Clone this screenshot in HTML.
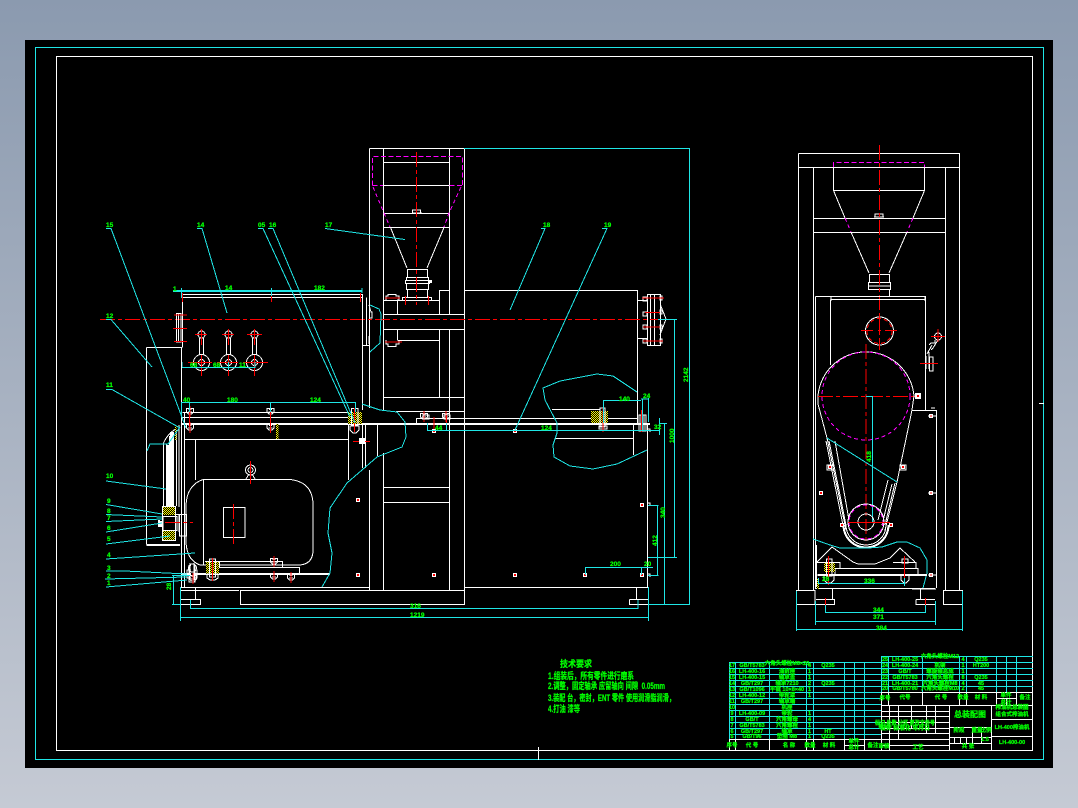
<!DOCTYPE html>
<html lang="zh"><head><meta charset="utf-8"><title>CAD</title>
<style>
html,body{margin:0;padding:0;width:1078px;height:808px;overflow:hidden;background:linear-gradient(180deg,#8b9aaf 0%,#c5cad4 100%)}
svg{position:absolute;left:0;top:0}
text{font-family:"Liberation Sans","Noto Sans CJK SC",sans-serif;fill:#00ff00;stroke:#00ff00;stroke-width:.25;font-weight:bold}
.w{stroke:#fff;fill:none;stroke-width:1}
.c{stroke:#1fe6e6;fill:none;stroke-width:1}
.r{stroke:#f00;fill:none;stroke-width:1}
.rd{stroke:#f00;fill:none;stroke-width:1;stroke-dasharray:15 3 4 3}
.m{stroke:#f0f;fill:none;stroke-width:1;stroke-dasharray:5 2.5}
.m2{stroke:#f0f;fill:none;stroke-width:1;stroke-dasharray:4 3}
</style></head><body>
<svg width="1078" height="808" viewBox="0 0 1078 808" xmlns="http://www.w3.org/2000/svg">
<defs>
<pattern id="h" width="2" height="2" patternUnits="userSpaceOnUse"><rect width="2" height="2" fill="#000"/><rect width="1" height="1" fill="#ff0"/><rect x="1" y="1" width="1" height="1" fill="#ff0"/></pattern>
<g id="b"><path class="w" d="M-3.5,-2.5H3.5V1L1.5,3H-1.5L-3.5,1Z"/><path class="w" d="M-1.5,-1.5H1.5M-2,1H2"/><path class="r" d="M0,-5V6"/></g>
<g id="d"><rect x="-2" y="-2" width="4" height="4" fill="#fff"/><rect x="-1" y="-1" width="2" height="2" fill="#f00"/></g>
</defs>
<rect x="25" y="40" width="1028" height="728" fill="#000"/>
<g shape-rendering="crispEdges">
<path d="M35.500,47.500H1043.500V759.500H35.500Z" fill="none" stroke="#1fe6e6" stroke-width="1"/>
<path d="M56.500,56.500H1032.500V750.500H56.500Z" fill="none" stroke="#fff" stroke-width="1"/>
<path class="w" d="M538.500,747V760M1039,403.500H1044"/>

<!-- main front view: frame -->
<path class="w" d="M369.500,148.500H464.500V604.500H240.500V590.500H464.500M369.500,148.500V408M369.500,470V590M383.500,148.500V411M383.500,453V590M449.500,148.500V314M449.500,329V590M383.500,162.500H449.500M383.500,185.500H449.500M383.500,213.500H449.500M383.500,227.500H449.500M377.500,424V456"/>
<path class="w" d="M383.500,300.500H439.500V290.500H449.500M383.500,314.500H464.500M383.500,329.500H464.500M397.500,340.500H439.500M439.500,290V314M439.500,329V397M383.500,397.500H464.500M396,411.500H464.500M383.500,487.500H449.500M383.500,502.500H449.500M397.500,300V314M397.500,329V340"/>
<path class="w" d="M390.500,227.500L407,268M444,227.500L427,268"/>
<path class="m" d="M372.500,185.500V156.500H462.500V185.500M372.500,185.500H383M449.500,185.500H462.500"/>
<path class="m2" d="M373,187L384,213L390,227M461,187L449,213L444,227"/>
<path class="w" d="M407.500,269.500H427.500V277.500H407.500ZM406.500,277.500H428.500V280.500H406.500ZM405.500,280.500H429.500V283.500H405.500ZM406.500,283.500H428.500V289.500H406.500ZM407.500,289.500H427.500V297.500H407.500ZM402.500,297.500H431.500V300.500H402.500Z"/>
<rect x="428" y="280" width="4" height="3" fill="#fff"/>
<path class="w" d="M412.500,213V210H420.500V213M412,213H422"/>
<path class="w" d="M386,300V296H388V294.500H396V296H399V300H397M386,340V344H388V346.500H396V344H399V340"/>
<path class="rd" d="M416.500,152V305"/>
<path class="r" d="M405.500,296V305M428.500,296V305M385,298H400M385,342H402"/>

<!-- right body -->
<path class="w" d="M464.500,290.500H637.500V425M637.500,300.500H648M637.500,338.500H648"/>
<path class="w" d="M647.500,294.500H660.500V345.500H647.500ZM650.500,294.500V345.500M654.500,294.500V345.500M660.500,305L666,319L660,335"/>
<path class="w" d="M643,297H647V301H643ZM643,312H647V316H643ZM643,325H647V329H643ZM643,339H647V343H643ZM660,296H662V300H660ZM660,310H662V314H660ZM660,325H662V329H660ZM660,339H662V343H660Z"/>
<path class="r" d="M642,298H664M645,312.500H660M643,327H660M643,341H663"/>
<path class="rd" d="M100,319.500H670"/>

<!-- upper-left box -->
<path class="w" d="M182.500,294.500H362.500V298M182.500,297.500H362.500M182.500,294.500V347M362.500,297V410M362,345.500H369M366.500,297.500V345.500M146.500,347.500H182.500M146.500,347.500V544.500M146.500,544.500H180M146.500,545.500H180"/>
<path class="w" d="M176.500,313.500H181V342H176.500ZM178.500,313.500V342"/>
<path class="r" d="M174,315H187M173,328.500H187M174,341.500H187M182.500,293V302M271.500,293V302M360.500,293V302"/>
<path class="w" d="M369,305L371,312H372V318H369M369,336V344"/>
<!-- gauges -->
<g class="w">
<circle cx="201.500" cy="362.500" r="8"/><circle cx="228.500" cy="362.500" r="8"/><circle cx="254.500" cy="362.500" r="8"/>
<circle cx="201.500" cy="362.500" r="3"/><circle cx="228.500" cy="362.500" r="3"/><circle cx="254.500" cy="362.500" r="3"/>
<circle cx="201.500" cy="334.500" r="3.500"/><circle cx="228.500" cy="334.500" r="3.500"/><circle cx="254.500" cy="334.500" r="3.500"/>
<path d="M199.500,338V355M203.500,338V355M226.500,338V355M230.500,338V355M252.500,338V355M256.500,338V355"/>
</g>
<path class="r" d="M195,334.500H207M222,334.500H234M247,334.500H262M201.500,329V345M228.500,329V345M254.500,329V345M188,362.500H212M217,362.500H238M243,362.500H268M201.500,355V376M228.500,355V376M254.500,355V376"/>
<path class="c" d="M182,367.500H255M182,362V368M228.500,362V370M255,362V368"/>

<!-- middle plate -->
<path class="w" d="M182.500,412.500H362M182.500,417.500H362M181,423.500H650M181,424.500H650M184.500,439.500H348M195.500,440V480M348.500,424V480M362.500,424V468M365.500,424V468M416.500,423V418.500H637M552,409.500H600M555,438.500H633M633.500,424V455"/>
<path class="w" d="M181.500,347V587M184.500,412V587"/>
<path class="w" d="M647.500,423V587M464.500,587.500H648M181,587.500H369M181,590.500H239M195.500,588V599M181,599.500H200.500V604.500H181M636.500,588V599M629.500,599.500H648M629.500,599.500V604.500H648"/>
<!-- motor -->
<path class="w" d="M203.500,479.500H290Q313,482 313,505V550Q313,565 298,565H200Q186,560 186,540V505Q187,485 203,479.500ZM203.500,479.500V565M223.500,507.500H245V537.500H223.500Z"/>
<path class="rd" d="M233.500,504V544"/>
<circle class="w" cx="250.500" cy="470" r="5"/><circle class="w" cx="250.500" cy="470" r="2.500"/>
<path class="w" d="M246,479L249,474M255,479L252,474"/>
<path class="r" d="M250.500,461V484"/>
<path class="w" d="M205,561.500H282.500V567.500M219,567.500H299.500V573M181,573.500H330M181,574.500H330M219.500,561V567"/>
<!-- fan/pulley -->
<path class="w" d="M163.500,444V506M166.500,444V506M169.500,436V506M173.500,432V506M176.500,430V506M179,425V507"/>
<path class="w" d="M163,444Q168,433 176,429"/>
<path d="M166.500,506H169.500V445H166.500ZM170,506H173V432H170Z" fill="#fff"/>
<rect class="w" x="162.500" y="506.500" width="13" height="34"/>
<rect x="163" y="507" width="12" height="8" fill="url(#h)"/>
<rect x="163" y="531" width="12" height="9" fill="url(#h)"/>
<path class="w" d="M163,516.500H177V530.500H163ZM176,514.500H179V532M179.500,514.500H186.500V536H179.500Z"/>
<rect x="158" y="520" width="5" height="7" fill="#fff"/><rect x="160" y="519" width="2" height="2" fill="#000"/>
<path class="rd" d="M165,522.500H193"/>
<!-- motor mounts -->
<path class="w" d="M189,565.500H195V582H189ZM187,570H197V578H187Z"/>
<rect x="191" y="562" width="3" height="20" fill="#000"/><path class="w" d="M190,563V580M194,563V580"/>
<circle class="w" cx="192.500" cy="568" r="4"/>
<rect x="206" y="562" width="13" height="12" fill="url(#h)"/>
<path class="w" d="M209.500,559H215.500V577H209.500ZM207,574H218V578L215,580H210L207,578Z"/>
<path class="r" d="M212.500,558V581"/>
<use href="#b" x="274" y="561"/><use href="#b" x="291" y="577"/><use href="#b" x="274" y="576"/><use href="#b" x="193" y="578"/>
<use href="#b" x="190" y="411"/><use href="#b" x="190" y="427"/><use href="#b" x="270.500" y="411"/><use href="#b" x="270.500" y="427"/>
<path class="r" d="M189.500,411V427M270.500,411V430"/>
<rect x="276" y="424" width="2.500" height="15" fill="url(#h)"/>
<path d="M175,425h1.500v15h-1.500z" fill="url(#h)"/>
<rect x="348" y="412" width="14" height="12" fill="url(#h)"/>
<path class="w" d="M351.500,408.500H358V425H351.500ZM350,426H359V430L356,433H353L350,430Z"/>
<path class="r" d="M354.500,408V432M353,441.500H370"/>
<rect x="359" y="438" width="6" height="6" fill="#fff"/>
<use href="#b" x="424" y="416"/><use href="#b" x="446" y="416"/>
<path class="w" d="M423,415H429V419H423ZM444,415H450V419H444Z"/>
<!-- right inner hatched bolt -->
<rect x="591" y="411" width="17" height="12" fill="url(#h)"/>
<path class="w" d="M600,408V427H605V408ZM599,426H607V429H599Z"/>
<path class="r" d="M603,408V432"/>
<path class="w" d="M639,415H646V431H639ZM641,415V431M644,415V431"/>
<path class="r" d="M641.500,410V432M434,417V430M446.500,415V430"/>
<use href="#d" x="358" y="500"/><use href="#d" x="358" y="575"/><use href="#d" x="434" y="575"/><use href="#d" x="515" y="575"/><use href="#d" x="585" y="575"/><use href="#d" x="642" y="575"/><use href="#d" x="642" y="505"/><use href="#d" x="515" y="431"/><use href="#d" x="434" y="431"/>
<path class="w" d="M648,429H650V432M648,503H650V506M648,574H650V577"/>

<!-- break curves -->
<path class="c" d="M362,404L380,410L397,412L405,422L406,437L402,447L377,457L347,483L330,508L328,533L332,553L330,573L322,587"/>
<path class="c" d="M637,392L613,376L597,374L560,381L543,388L545,400L557,423L557,433L553,445L554,457L570,466L593,469L617,464L647,450"/>
<path class="c" d="M370,305L379,309L381,314L380,343L370,352"/>
<path class="c" d="M147,451L150,444H168L180,427"/>

<!-- leaders -->
<path class="c" d="M106,228.500H111L186,428M197,228.500H202L227,313M258,228.500H263L350,417M268,228.500H273L355,423M325,228.500L405,239.500M106,319.500H111L152,367M106,389.500H112L180,428M541,228.500H545L510,310M602,228.500H607L515,430"/>
<path class="c" d="M106,481L166,489M106,504.500L162,514M106,514.500L162,517M106,521.500L162,519M106,532L162,523M106,544L170,536M106,559L195,553M106,571H125L187,574M105,579L187,577M106,587L187,580"/>

<!-- dimension lines -->
<path class="c" d="M173,290.500H362M173,291.500H362M181.500,288V298M271.500,288V296M362,288V293"/>
<path class="c" d="M181.500,402.500H355.500M181.500,402V416M189.500,402V412M355.500,402V412M270.500,402V412"/>
<path class="c" d="M464,148.500H690M689.500,148.500V604.500H648M674.500,319.500V557.500M658,319.500H677M648,557.500H677M664.500,423V604M660,423.500H667M427.500,423V431M427,430.500H648M446.500,423V431M659.500,418V435M648,430.500H660"/>
<path class="c" d="M603.500,400.500H641M603.500,400V423M642.500,399.500V430M648.500,398V422M641,399H649M648,505.500H658.500M657.500,505.500V575.500M648,575.500H658.500M585.500,567.500H653M585.500,567V575M641.500,567V575"/>
<path class="c" d="M172,604.500H181M173.500,575V604M172,575.500H190M190.500,600V609M190,608.500H638M638,600V609M180.500,587V621M180,617.500H648M648.500,587V621"/>

<!-- side view -->
<path class="w" d="M798.500,153.500H959.500V590.500M798.500,153.500V590.500M798.500,167.500H959.500M813.500,167.500V590M945.500,167.500V590M813.500,218.500H945.500M813.500,232.500H945.500"/>
<path class="w" d="M833.500,167.500V190.500H924.500V167.500M833.500,190.500L845,218M851,232L869,273M924.500,190.500L913,218M907,232L889,273"/>
<path class="m" d="M833.500,167V162.500H924.500V167"/>
<path class="m2" d="M845,218L851,232M913,218L907,232"/>
<path class="w" d="M869.500,274.500H889.500V282.500H869.500ZM868.500,282.500H890.500V289.500H868.500ZM868.500,286H890.500M869.500,289.500H889.500V296"/>
<path class="w" d="M875,217V214H883V217M874,217H884"/>
<path class="rd" d="M879.500,145V350"/>
<path class="w" d="M815.500,296.500H925.500V410M830.500,299.500H925.500M830.500,299.500V365M815.500,296.500V588M925,296V301M831,296V301"/>
<circle class="w" cx="879.500" cy="331" r="14"/>
<circle cx="879.500" cy="331" r="12.500" fill="none" stroke="#f00" stroke-dasharray="4 3"/>
<path class="r" d="M861,330.500H873M885,330.500H897M878,330.500H881M879.500,316V322M879.500,340V346"/>
<path class="w" d="M818,404A48,48 0 1 1 914,396"/>
<circle class="m2" cx="866" cy="396" r="44"/>
<path class="rd" d="M866,344V545"/>
<path class="rd" d="M818,396.500H915"/>
<rect x="915" y="393" width="6" height="6" fill="#fff"/><rect x="917" y="395" width="2" height="2" fill="#f00"/>
<path class="w" d="M818,404L827,438L846,530M914,396L912,410L897,482L885,530M826,441L843,525M829,441L846,525M835,441L849,520M892,484L882,525M895,483L885,525M888,480L878,520"/>
<path class="c" d="M827,438L897,482M866,396.500H873M872.500,396V522M866,522.500H873"/>
<circle class="w" cx="866" cy="522" r="8"/>
<circle class="w" cx="866" cy="522" r="18"/>
<circle class="m2" cx="866" cy="522" r="17"/>
<path class="w" d="M846,525A20,20 0 0 0 886,525M843,525A23,23 0 0 0 889,525M844,525A22,22 0 0 0 888,525"/>
<path class="r" d="M848,522.500H890"/>
<use href="#d" x="830" y="467"/><use href="#d" x="903" y="467"/><use href="#d" x="842" y="525"/><use href="#d" x="891" y="525"/><use href="#d" x="821" y="493"/><use href="#d" x="931" y="416"/><use href="#d" x="931" y="493"/><use href="#d" x="931" y="575"/>
<path class="w" d="M827,465H833V470H827ZM900,465H906V470H900ZM928,416H936M928,493H936M928,575H936"/>
<path class="w" d="M912.500,410.500H936.500V588M912,589H936M931,408H935"/>
<path class="w" d="M926,356V369M929,352V369M929.500,357H933V371H929.500ZM929,345L931,343H935V340M931,350L933,348L938,340M927,354L932,345"/>
<circle class="w" cx="938" cy="336.500" r="3.500"/>
<path class="r" d="M931,336.500H945M938,329V342M920,363.500H938"/>
<!-- side base -->
<path class="c" d="M813,539L830,545L840,548H868L882,547L897,542H907L920,548L927,560V573L923,588"/>
<path class="w" d="M817,562L832,547L853,562L858,564H875L890,558L900,548L915,562M817,562.500H840V568M893,562.500H916V568M835,568.500H918V574M835,568V574M817.500,574.500H927M817.500,575.500H927"/>
<path class="w" d="M816.500,545V587M815,588.500H935M832.500,589V599M920.500,589V599M816,599.500H834.500V604.500H816M916,599.500H935M916,599.500V604.500H935M796.500,590.500H815V604.500H796.500ZM943.500,590.500H962.500V604.500H943.500Z"/>
<path class="w" d="M826.500,559H832V576H826.500ZM824,575H834V580L831,583H827L824,580ZM902,559H908V563H902ZM901,575H909V580L906,583H904L901,580Z"/>
<rect x="824" y="563" width="11" height="9" fill="url(#h)"/>
<path class="w" d="M826.500,559H832V576H826.500Z"/>
<path class="r" d="M828.500,556V585M904.500,556V585M825.500,598V611M925.500,598V611"/>
<rect x="817" y="578" width="2" height="11" fill="url(#h)"/>
<path class="c" d="M796.500,591V631M796,629.500H962M962.500,591V631M815.500,601V625M815,621.500H935M935.500,601V625M825.500,605V613M825,612.500H925M925.500,605V613M818,583.500H905M818.500,578V584M904.500,578V586"/>

<!-- tables -->
<path class="c" d="M729,662.500H881M729,668.500H881M729,674.500H881M729,680.500H881M729,686.500H881M729,692.500H881M729,698.500H881M729,704.500H881M729,710.500H881M729,716.500H881M729,722.500H881M729,728.500H881M729,734.500H881"/>
<path class="c" d="M729.500,662V739M735.500,662V739M769.500,662V739M806.500,662V739M813.500,662V739M844.500,662V739M854.500,662V739M864.500,662V739"/>
<path class="c" d="M881,656.500H1033M881,662.500H1033M881,668.500H1033M881,674.500H1033M881,680.500H1033M881,686.500H1033"/>
<path class="c" d="M881.500,656V692M888.500,656V692M922.500,656V692M959.500,656V692M966.500,656V692M996.500,656V692M1006.500,656V692M1016.500,656V692"/>
<path class="w" d="M729,739.500H881M729.500,739V751M735.500,739V751M769.500,739V751M806.500,739V751M813.500,739V751M844.500,739V751M864.500,739V751M844,745.500H864M881.500,692V751M881,692.500H1033M888.500,692V705M922.500,692V705M959.500,692V705M966.500,692V705M996.500,692V705M1016.500,692V705M996,698.500H1016M1006.500,698.500V705"/>
<path class="w" d="M881,705.500H1033M881,711.500H949M881,716.500H949M881,722.500H949M881,728.500H949M881,733.500H949M881,739.500H949M881,745.500H949M889.500,705V751M898.500,705V739M911.500,705V728M926.500,705V733M935.500,705V733M949.500,705V751M991.500,705V751M949,727.500H991M949,737.500H991M949,743.500H991M972.500,727V743M981.500,727V743M954.500,737V743M960.500,737V743M966.500,737V743M991,719.500H1033M991,736.500H1033"/>
</g>

<!-- labels -->
<g font-size="6.500">
<text x="106" y="227">15</text><text x="197" y="227">14</text><text x="258" y="227">05</text><text x="269" y="227">16</text><text x="325" y="227">17</text><text x="543" y="227">18</text><text x="604" y="227">19</text><text x="106" y="318">12</text><text x="106" y="387">11</text>
<text x="106" y="478">10</text><text x="107" y="503">9</text><text x="107" y="513">8</text><text x="107" y="520">7</text><text x="107" y="530">6</text><text x="107" y="541">5</text><text x="107" y="557">4</text><text x="107" y="570">3</text><text x="107" y="578">2</text><text x="107" y="585">1</text>
<text x="173" y="291">1</text><text x="225" y="290">14</text><text x="314" y="290">182</text><text x="190" y="367">68</text><text x="213" y="367">68</text><text x="239" y="367">11</text>
<text x="183" y="402">40</text><text x="227" y="402">180</text><text x="310" y="402">124</text>
<text x="435" y="430">44</text><text x="541" y="430">124</text><text x="619" y="401">140</text><text x="643" y="398">24</text><text x="654" y="429">32</text>
<text x="610" y="566">200</text><text x="644" y="566">20</text>
<text x="410" y="608">316</text><text x="410" y="617">1219</text>
<text x="864" y="583">336</text><text x="873" y="612">344</text><text x="873" y="619">371</text><text x="876" y="630">384</text><text x="822" y="581">28</text>
<text transform="translate(688,382) rotate(-90)">2142</text>
<text transform="translate(674,443) rotate(-90)">1000</text>
<text transform="translate(665,518) rotate(-90)">340</text>
<text transform="translate(657,546) rotate(-90)">412</text>
<text transform="translate(171,590) rotate(-90)">28</text>
<text transform="translate(871,462) rotate(-90)">418</text>
</g>

<!-- tech notes -->
<g font-size="9">
<text x="560" y="667" textLength="32" lengthAdjust="spacingAndGlyphs">技术要求</text>
<text x="548" y="679" textLength="86" lengthAdjust="spacingAndGlyphs">1.组装后，所有零件进行磨系</text>
<text x="548" y="689" textLength="117" lengthAdjust="spacingAndGlyphs">2.调整，固定轴承 应留轴向 间隙 &#160;0.05mm</text>
<text x="548" y="701" textLength="127" lengthAdjust="spacingAndGlyphs">3.装配 台，密封，ENT 零件 使用润滑脂润滑，</text>
<text x="548" y="712" textLength="32" lengthAdjust="spacingAndGlyphs">4.打油 漆等</text>
</g>

<!-- table text -->
<g font-size="5.500" text-anchor="middle">
<text x="732" y="667">17</text><text x="752" y="667">GB/T5783</text><text x="787" y="665">六角头螺栓M8×20</text><text x="809.500" y="667">4</text><text x="828" y="667">Q235</text>
<text x="732" y="673">16</text><text x="752" y="673">LH-400-16</text><text x="787" y="673">油封座</text><text x="809.500" y="673">1</text>
<text x="732" y="679">15</text><text x="752" y="679">LH-400-15</text><text x="787" y="679">轴承盖</text><text x="809.500" y="679">1</text>
<text x="732" y="685">14</text><text x="752" y="685">GB/T297</text><text x="787" y="685">轴承7210</text><text x="809.500" y="685">2</text><text x="828" y="685">Q235</text>
<text x="732" y="691">13</text><text x="752" y="691">GB/T1096</text><text x="787" y="691">平键 10×8×40</text><text x="809.500" y="691">1</text>
<text x="732" y="697">12</text><text x="752" y="697">LH-400-12</text><text x="787" y="697">带轮罩</text><text x="809.500" y="697">1</text>
<text x="732" y="703">11</text><text x="752" y="703">GB/T297</text><text x="787" y="703">轴承端</text>
<text x="732" y="709">10</text><text x="787" y="709">机座</text>
<text x="732" y="715">9</text><text x="752" y="715">LH-400-09</text><text x="787" y="715">带轮</text><text x="809.500" y="715">1</text>
<text x="732" y="721">8</text><text x="752" y="721">GB/T</text><text x="787" y="721">六角螺母</text><text x="809.500" y="721">4</text>
<text x="732" y="727">7</text><text x="752" y="727">GB/T5783</text><text x="787" y="727">六角螺栓</text><text x="809.500" y="727">1</text>
<text x="732" y="733">6</text><text x="752" y="733">GB/T297</text><text x="787" y="733">轴承</text><text x="809.500" y="733">1</text><text x="828" y="733">HT</text>
<text x="732" y="738">5</text><text x="752" y="738">GB/T96</text><text x="787" y="738">垫圈 M8</text><text x="809.500" y="738">1</text><text x="828" y="738">Q235</text>
<text x="732" y="747">序号</text><text x="752" y="747">代 号</text><text x="789" y="747">名 称</text><text x="810" y="747">数量</text><text x="829" y="747">材 料</text><text x="854" y="743">单件</text><text x="854" y="749">总计</text><text x="873" y="747">备注</text>
<text x="885" y="661">25</text><text x="905" y="661">LH-400-25</text><text x="940" y="658">六角头螺栓M12</text><text x="963" y="661">4</text><text x="981" y="661">Q235</text>
<text x="885" y="667">24</text><text x="905" y="667">LH-400-24</text><text x="940" y="667">机架</text><text x="963" y="667">1</text><text x="981" y="667">HT200</text>
<text x="885" y="673">23</text><text x="905" y="673">GB/T</text><text x="940" y="673">螺旋轴总成</text><text x="963" y="673">1</text>
<text x="885" y="679">22</text><text x="905" y="679">GB/T5783</text><text x="940" y="679">六角头螺栓</text><text x="963" y="679">8</text><text x="981" y="679">Q235</text>
<text x="885" y="685">21</text><text x="905" y="685">LH-400-21</text><text x="940" y="685">六角头螺栓M8</text><text x="963" y="685">4</text><text x="981" y="685">45</text>
<text x="885" y="690">20</text><text x="905" y="690">GB/T5780</text><text x="940" y="690">六角头螺栓M10</text><text x="963" y="690">2</text><text x="981" y="690">45</text>
<text x="885" y="700">序号</text><text x="905" y="699">代号</text><text x="941" y="699">代 号</text><text x="963" y="699">数量</text><text x="981" y="699">材 料</text><text x="1006" y="697">单件</text><text x="1006" y="704">总计</text><text x="1025" y="699">备注</text>
<text x="905" y="725" font-size="6" textLength="60" lengthAdjust="spacingAndGlyphs">标记 处数 分区 更改文件号</text><text x="905" y="730" font-size="6" textLength="50" lengthAdjust="spacingAndGlyphs">设计 标准化 年月日</text>
<text x="970" y="717" font-size="8">总装配图</text>
<text x="959" y="732">阶段</text><text x="977" y="732">重量</text><text x="986" y="732">比例</text><text x="985" y="741">1:5</text>
<text x="968" y="748">共 张</text>
<text x="1012" y="709">榨油机总装图</text><text x="1012" y="716">组合式榨油机</text><text x="1012" y="729">LH-400榨油机</text>
<text x="1012" y="744">LH-400-00</text>
<text x="884" y="728">标记</text><text x="884" y="748">审核</text><text x="918" y="749">工艺</text>
</g>
</svg>
</body></html>
